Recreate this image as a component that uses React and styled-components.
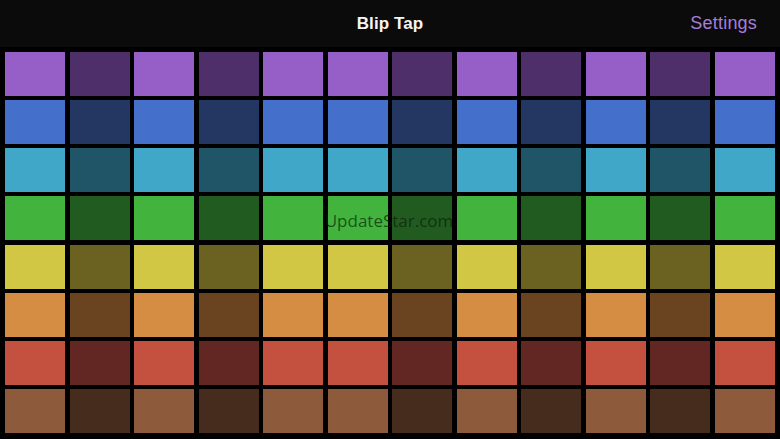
import React from "react";
import styled, { createGlobalStyle } from "styled-components";

const Global = createGlobalStyle`
  html, body { margin: 0; padding: 0; background: #000; }
  body { width: 780px; height: 439px; overflow: hidden; font-family: "Liberation Sans", Arial, sans-serif; }
`;

const Screen = styled.div`
  width: 780px;
  height: 439px;
  display: flex;
  flex-direction: column;
  background: #000;
  position: relative;
`;

const Header = styled.header`
  height: 47px;
  flex: none;
  background: #0c0b0c;
  display: grid;
  grid-template-columns: 1fr auto 1fr;
  align-items: center;
  padding: 0 23px 0 0;
  box-sizing: border-box;
`;

const Title = styled.h1`
  grid-column: 2;
  margin: 0;
  color: #f4f4f4;
  font-size: 17px;
  font-weight: 600;
  letter-spacing: 0.1px;
  transform: translateX(11.5px);
`;

const SettingsButton = styled.button`
  grid-column: 3;
  justify-self: end;
  background: none;
  border: 0;
  padding: 0;
  color: #a67ed9;
  font-family: inherit;
  font-size: 18px;
  letter-spacing: 0.2px;
  cursor: pointer;
`;

const Grid = styled.main`
  flex: 1;
  display: grid;
  grid-template-columns: repeat(12, 1fr);
  grid-template-rows: repeat(8, 1fr);
  column-gap: 4.5px;
  row-gap: 4.3px;
  padding: 5px 5px 6px 5px;
  box-sizing: border-box;
`;

const Pad = styled.div`
  background: ${(p) => p.$color};
`;

const Watermark = styled.div`
  position: absolute;
  left: 0;
  right: 0;
  top: 209px;
  text-align: center;
  color: rgba(8, 28, 8, 0.68);
  font-family: "Open Sans", "Liberation Sans", sans-serif;
  font-size: 17px;
  pointer-events: none;
  transform: translateX(-1px);
`;

const rows = [
  ["#965fc8", "#4e2f69"],
  ["#4470cc", "#233762"],
  ["#41a7c9", "#1f5566"],
  ["#42b43e", "#225b20"],
  ["#d2c645", "#6b6222"],
  ["#d48d42", "#6a4420"],
  ["#c4503f", "#622723"],
  ["#8d5a3b", "#462c1d"],
];

const pattern = [1, 0, 1, 0, 1, 1, 0, 1, 0, 1, 0, 1];

export default function App() {
  return (
    <Screen>
      <Global />
      <Header>
        <Title>Blip Tap</Title>
        <SettingsButton>Settings</SettingsButton>
      </Header>
      <Grid>
        {rows.map(([light, dark], r) =>
          pattern.map((on, c) => (
            <Pad key={`${r}-${c}`} $color={on ? light : dark} />
          ))
        )}
      </Grid>
      <Watermark>UpdateStar.com</Watermark>
    </Screen>
  );
}
